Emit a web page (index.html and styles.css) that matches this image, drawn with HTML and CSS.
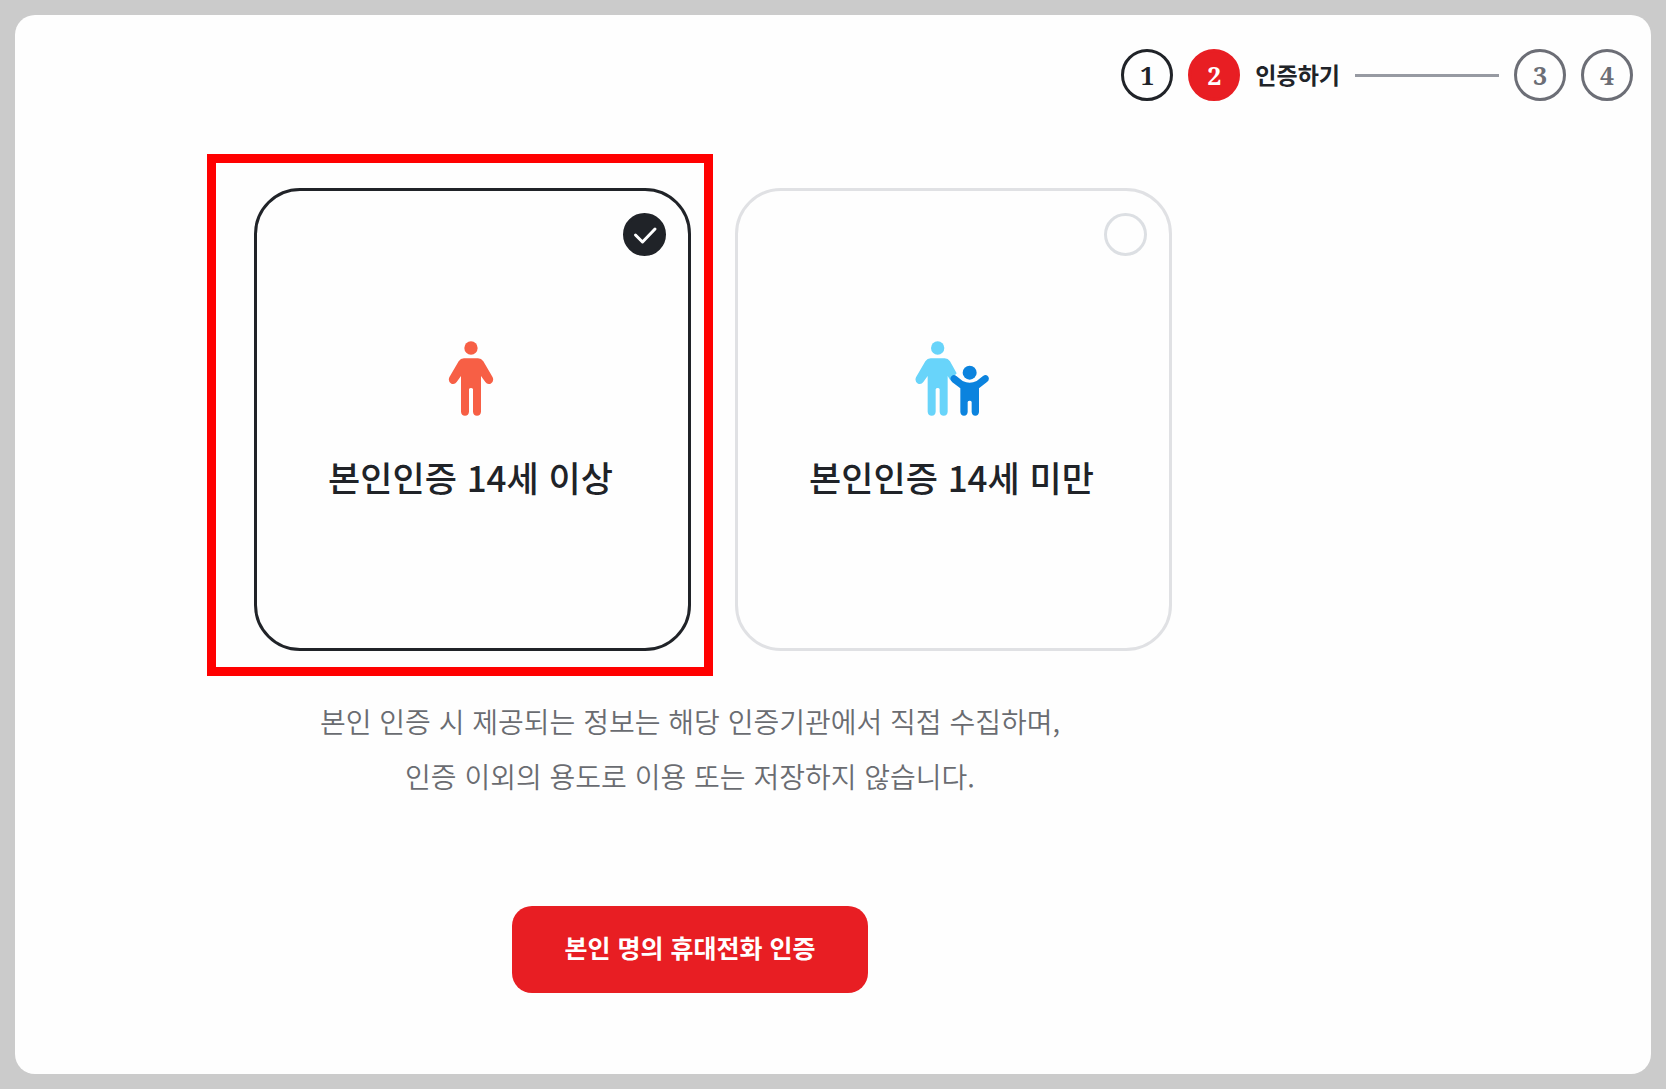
FILE: index.html
```html
<!DOCTYPE html>
<html lang="ko">
<head>
  <meta charset="UTF-8">
  <meta name="viewport" content="width=device-width, initial-scale=1">
  <title>본인인증</title>
  <link rel="stylesheet" href="styles.css">
</head>
<body>
  <main class="panel">
    <!-- Progress steps -->
    <ol class="steps">
      <li class="step done"><span class="num">1</span></li>
      <li class="step current" aria-current="step">
        <span class="num">2</span>
        <span class="step-name">인증하기</span>
        <span class="step-line"></span>
      </li>
      <li class="step"><span class="num">3</span></li>
      <li class="step"><span class="num">4</span></li>
    </ol>

    <form class="verify">
      <div class="cards">
        <!-- Age 14 and over -->
        <div class="card-wrap highlight">
          <label class="card" for="age-over">
            <span class="check">
              <input type="radio" name="age" id="age-over" value="over" checked>
              <svg viewBox="0 0 43 43" aria-hidden="true">
                <path d="M12.5 22 L19.5 29 L32 16"/>
              </svg>
            </span>
            <svg class="icon" width="46" height="76" viewBox="81 63 138 228" aria-hidden="true">
              <circle cx="150" cy="84" r="20" fill="#f75f45"/>
              <path fill="#f75f45" d="M129 115 H171 Q181 115 187 124 L215 172 Q220 185 209 191 Q199 195 193 186 L180 168 V275 Q179 287 168 287 Q157 287 156 275 V208 Q155 204 150 204 Q145 204 144 208 V275 Q143 287 132 287 Q121 287 120 275 V168 L107 186 Q101 195 91 191 Q80 185 85 172 L113 124 Q119 115 129 115 Z"/>
            </svg>
            <span class="card-title">본인인증 14세 이상</span>
          </label>
        </div>

        <!-- Under 14 -->
        <div class="card-wrap">
          <label class="card" for="age-under">
            <span class="check">
              <input type="radio" name="age" id="age-under" value="under">
              <svg viewBox="0 0 43 43" aria-hidden="true">
                <path d="M12.5 22 L19.5 29 L32 16"/>
              </svg>
            </span>
            <svg class="icon" width="74" height="76" viewBox="58 63 222 228" aria-hidden="true">
              <circle cx="126" cy="84" r="20" fill="#68d4fa"/>
              <path fill="#68d4fa" d="M105 115 H147 Q157 115 163 124 L183 160 L164 181 L156 168 V275 Q155 287 144 287 Q133 287 132 275 V208 Q131 204 126 204 Q121 204 120 208 V275 Q119 287 108 287 Q97 287 96 275 V168 L83 186 Q77 195 67 191 Q56 185 61 172 L89 124 Q95 115 105 115 Z"/>
              <circle cx="222" cy="158" r="21" fill="#0b83de"/>
              <path fill="#0b83de" d="M183 169 L201 183 Q222 194 243 183 L261 169 Q272 161 278 170 Q283 179 273 187 L250 205 V276 Q249 287 239 287 Q229 287 228 276 V246 Q227 242 222 242 Q217 242 216 246 V276 Q215 287 205 287 Q195 287 194 276 V205 L170 187 Q161 179 166 170 Q173 161 183 169 Z"/>
            </svg>
            <span class="card-title">본인인증 14세 미만</span>
          </label>
        </div>
      </div>

      <div class="bottom">
        <p class="notice">본인 인증 시 제공되는 정보는 해당 인증기관에서 직접 수집하며,<br>인증 이외의 용도로 이용 또는 저장하지 않습니다.</p>
        <button class="btn" type="button">본인 명의 휴대전화 인증</button>
      </div>
    </form>
  </main>
</body>
</html>
```

FILE: styles.css
```css
* {
  box-sizing: border-box;
}
body {
  margin: 0;
  padding: 15px;
  background-color: #cbcbcb;
  font-family: "Noto Sans CJK KR", sans-serif;
  color: #202328;
}
.panel {
  min-height: calc(100vh - 30px);
  padding: 34px 18px 40px;
  background-color: #fefefe;
  border-radius: 20px;
}

/* Steps */
.steps {
  display: flex;
  justify-content: flex-end;
  gap: 15px;
  margin: 0;
  padding: 0;
  list-style: none;
}
.step {
  display: flex;
  align-items: center;
  gap: 15px;
  color: #6c6e76;
}
.num {
  display: flex;
  align-items: center;
  justify-content: center;
  width: 52px;
  height: 52px;
  border: 3px solid currentColor;
  border-radius: 50%;
  font-family: "Noto Serif", "Liberation Serif", serif;
  font-size: 25px;
  font-weight: 700;
  line-height: 1;
}
.done {
  color: #202328;
}
.current .num {
  background-color: #e81e23;
  border-color: #e81e23;
  color: #fff;
}
.step-name {
  padding-bottom: 2px;
  color: #202328;
  font-size: 23px;
  font-weight: 700;
  line-height: 32px;
}
.step-line {
  width: 144px;
  height: 3px;
  background-color: #979aa2;
}

/* Age cards */
.verify {
  max-width: 918px;
  margin: 87px 0 0 221px;
}
.cards {
  display: grid;
  grid-template-columns: 1fr 1fr;
  gap: 44px;
}
.card-wrap {
  position: relative;
}
.card {
  display: flex;
  flex-direction: column;
  align-items: center;
  justify-content: center;
  gap: 35px;
  position: relative;
  min-height: 463px;
  padding: 3px 24px 0 20px;
  border: 3px solid #e0e1e4;
  border-radius: 46px;
  cursor: pointer;
}
.card:has(input:checked) {
  border-color: #202328;
}
.card-title {
  font-size: 35px;
  font-weight: 500;
  line-height: 50px;
}

/* Round tick in the card corner */
.check {
  position: absolute;
  top: 22px;
  right: 22px;
  width: 43px;
  height: 43px;
}
.check input {
  display: block;
  appearance: none;
  width: 100%;
  height: 100%;
  margin: 0;
  border: 3px solid #dcdfe3;
  border-radius: 50%;
}
.check input:checked {
  background-color: #202328;
  border-color: #202328;
}
.check svg {
  display: none;
  position: absolute;
  inset: 0;
  fill: none;
  stroke: #fff;
  stroke-width: 3;
  stroke-linecap: round;
  stroke-linejoin: round;
  pointer-events: none;
}
.check input:checked + svg {
  display: block;
}

/* Red guide frame drawn round the card */
.highlight::before {
  content: "";
  position: absolute;
  inset: -34px -22px -25px -47px;
  border: 9px solid #f00;
  pointer-events: none;
}

/* Notice and button */
.bottom {
  display: flex;
  flex-direction: column;
  align-items: center;
  padding-right: 46px;
}
.notice {
  margin: 43px 0 102px;
  color: #6a6c71;
  font-size: 28px;
  font-weight: 350;
  line-height: 55px;
  text-align: center;
}
.btn {
  padding: 18px 52px 22px;
  border: 0;
  border-radius: 20px;
  background-color: #e81e23;
  color: #fff;
  font-family: inherit;
  font-size: 25px;
  font-weight: 700;
  line-height: 47px;
  cursor: pointer;
}
```
